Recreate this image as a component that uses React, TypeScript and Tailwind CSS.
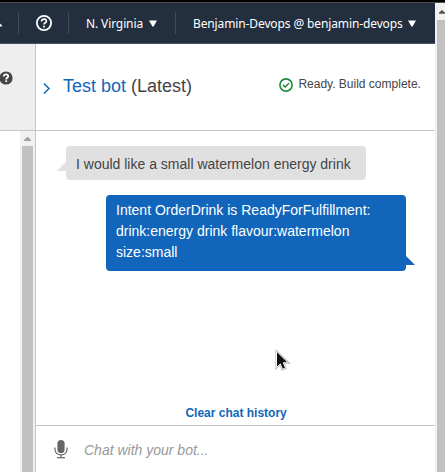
import React from 'react';

function NavBar() {
  return (
    <nav className="flex h-[41px] w-[435px] shrink-0 items-center border-b border-b-[#4a5462] bg-[#232f3e] font-['Noto_Sans',sans-serif] text-[12px] tracking-[-0.12px] text-white">
      <div className="flex h-[22px] w-[19px] shrink-0 items-center border-r border-[#444b54]">
        <svg width="3" height="10" viewBox="0 0 3 10"><path d="M0 5.5 L2 7.5 V8.5 H0Z" fill="white" /></svg>
      </div>
      <div className="flex h-[22px] w-[50px] shrink-0 items-center justify-center border-r border-[#444b54]">
        <svg width="16" height="16" viewBox="0 0 16 16" fill="none" stroke="white">
          <circle cx="8" cy="8" r="7.1" strokeWidth="1.8" />
          <path d="M5.6 6.4C5.6 4.9 6.6 4.1 8 4.1s2.4.8 2.4 2.1C10.4 7.8 8 7.8 8 9.5" strokeWidth="1.7" />
          <path d="M8 10.8v1.7" strokeWidth="1.8" />
        </svg>
      </div>
      <div className="flex h-[22px] w-[107px] shrink-0 items-center border-r border-[#444b54] pl-[17px]">
        <span className="w-[63px] whitespace-nowrap pt-px">N. Virginia</span>
        <Triangle />
      </div>
      <div className="flex items-center pl-[17px]">
        <span className="w-[215px] whitespace-nowrap pt-px">Benjamin-Devops @ benjamin-devops</span>
        <Triangle />
      </div>
    </nav>
  );
}

function Triangle() {
  return <svg className="shrink-0" width="8" height="7" viewBox="0 0 8 7"><path d="M0 0.5H8L4.6 6.5H3.4Z" fill="white" /></svg>;
}

function ScrollArrow({ color }: { color: string }) {
  return <svg width="7" height="4" viewBox="0 0 7 4"><path d="M3 0h1l3 3v1H0V3Z" fill={color} /></svg>;
}

function Sidebar() {
  return (
    <aside className="flex w-[36px] shrink-0 flex-col border-r border-[#c6c6c6]">
      <div className="h-[87px] shrink-0 overflow-hidden border-b border-[#c6c6c6] bg-[#eee] pt-[27px]">
        <svg className="-ml-px" width="14" height="14" viewBox="0 0 14 14">
          <circle cx="7" cy="7" r="6.6" fill="#444" />
          <path d="M4.8 5.5C4.8 4.1 5.7 3.3 7 3.3s2.2.8 2.2 2C9.2 6.8 7.2 6.8 7.2 8.4" fill="none" stroke="white" strokeWidth="1.8" />
          <path d="M6.3 9.3h1.8v1.7H6.3z" fill="white" />
        </svg>
      </div>
      <div className="flex grow">
        <div className="w-[20px]" />
        <div className="flex w-[15px] flex-col bg-[#f1f1f1] pl-[2px] pr-[2px]">
          <div className="flex h-[15px] items-center justify-center pt-px"><ScrollArrow color="#a3a3a3" /></div>
          <div className="grow bg-[#c1c1c1]" />
        </div>
      </div>
    </aside>
  );
}

function BotHeader() {
  return (
    <header className="flex h-[87px] shrink-0 border-b border-[#c6c6c6] text-[#444]">
      <svg className="mt-[39px] ml-[7px] shrink-0" width="8" height="11" viewBox="0 0 8 11" fill="none" stroke="#1166bb" strokeWidth="1.5"><path d="M1 .5 6 5.5 1 10.5" /></svg>
      <h1 className="mt-[31px] ml-[12px] w-[216px] text-[18px] leading-[22px]"><span className="text-[#1166bb]">Test bot</span> (Latest)</h1>
      <svg className="mt-[34px] shrink-0" width="14" height="14" viewBox="0 0 14 14" fill="none" stroke="#1d8a3e" strokeWidth="1.6">
        <circle cx="7" cy="7" r="6.1" /><path d="m4 6.9 2.2 2.1L10 5.2" />
      </svg>
      <span className="mt-[31px] ml-[5.4px] whitespace-nowrap text-[12px] leading-[18px]">Ready. Build complete.</span>
    </header>
  );
}

function Conversation() {
  return (
    <main className="flex grow flex-col text-[14px] leading-[21px]">
      <div className="mt-[15px] flex">
        <svg className="mt-[16px] ml-[21px] shrink-0" width="9" height="9" viewBox="0 0 9 9"><path d="M0 9 9 0V9Z" fill="#e0e0e0" /></svg>
        <div className="h-[34px] w-[300px] rounded-[4px] bg-[#e0e0e0] px-[10px] pt-[8px] text-[#444]">I would like a small watermelon energy drink</div>
      </div>
      <div className="mt-[15px] ml-[70px] flex items-end">
        <div className="h-[76px] w-[300px] rounded-[4px] bg-[#1166bb] px-[10px] pt-[5px] text-white">Intent OrderDrink is ReadyForFulfillment: drink:energy drink flavour:watermelon size:small</div>
        <svg className="mb-[6px] shrink-0" width="9" height="9" viewBox="0 0 9 9"><path d="M0 0 9 9H0Z" fill="#1166bb" /></svg>
      </div>
      <button className="mt-auto mb-[3px] ml-[149.4px] w-[110px] text-left text-[12px] leading-[18px] font-bold text-[#1166bb]">Clear chat history</button>
    </main>
  );
}

function Composer() {
  return (
    <footer className="flex h-[47px] shrink-0 border-t border-[#c6c6c6]">
      <svg className="mt-[14px] ml-[18px] shrink-0" width="14" height="19" viewBox="0 0 14 19" fill="none" stroke="#666">
        <rect x="3.4" y="0" width="7.2" height="13" rx="3.6" fill="#666" stroke="none" />
        <path d="M1 7.5V9.2C1 12.6 3.5 14.8 7 14.8s6-2.2 6-5.6V7.5M7 14.8v3" strokeWidth="1.2" />
        <path d="M3 17.7h8" strokeWidth="1.2" />
      </svg>
      <span className="mt-[14px] ml-[16px] text-[14px] leading-[21px] text-[#999] italic">Chat with your bot...</span>
    </footer>
  );
}

export default function App() {
  return (
    <div className="relative flex h-[472px] w-[445px] flex-col overflow-hidden bg-white font-['Liberation_Sans',Arial,sans-serif]">
      <div className="h-[2px] shrink-0 bg-black" />
      <div className="h-px shrink-0 bg-[#504f4e]" />
      <div className="flex min-h-0 grow">
        <div className="flex w-[435px] flex-col">
          <NavBar />
          <div className="flex min-h-0 grow">
            <Sidebar />
            <section className="flex w-[399px] flex-col"><BotHeader /><Conversation /><Composer /></section>
          </div>
        </div>
        <div className="flex w-[10px] flex-col bg-[#f1f1f1]">
          <div className="flex h-[17px] shrink-0 items-center pl-[4px]"><ScrollArrow color="#505050" /></div>
          <div className="ml-[2px] grow bg-[#c1c1c1]" />
        </div>
      </div>
      <svg className="absolute top-[350px] left-[275px]" width="16" height="22" viewBox="0 0 16 22">
        <path d="M1.5 1.2v16.2l3.8-3.4 2.2 5.3 3-1.4-2.2-5.1h5Z" fill="#111" stroke="#aaa" strokeWidth="2" />
        <path d="M1.5 1.2v16.2l3.8-3.4 2.2 5.3 3-1.4-2.2-5.1h5Z" fill="#111" stroke="#fff" strokeWidth="1" />
      </svg>
    </div>
  );
}
